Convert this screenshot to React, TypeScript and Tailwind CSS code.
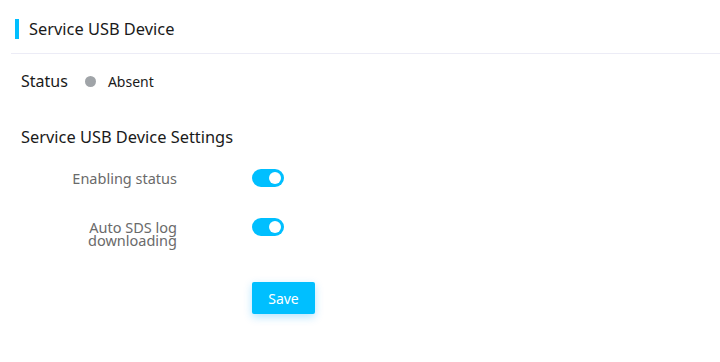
import React from "react";

function Toggle() {
  return (
    <div className="relative w-[32px] h-[18px] rounded-full bg-[#00bfff]">
      <div className="absolute right-[3px] top-[3px] w-[12px] h-[12px] rounded-full bg-white" />
    </div>
  );
}

export default function App() {
  return (
    <div
      className="w-[720px] h-[362px] bg-white"
      style={{ fontFamily: '"Noto Sans", "Open Sans", Arial, sans-serif' }}
    >
      <div className="pl-[11px] pt-[19px]">
        <div className="flex items-center h-[20px] pl-[4px]">
          <div className="w-[4px] h-[20px] bg-[#00bfff]" />
          <span className="ml-[10px] text-[16.4px] text-[#1a1a1a] leading-none">Service USB Device</span>
        </div>
        <div className="mt-[14px] h-px bg-[#ececf6]" />
      </div>
      <div className="pl-[21px]">
        <div className="flex items-center mt-[17px] h-[20px]">
          <span className="text-[16px] text-[#1a1a1a]">Status</span>
          <span className="ml-[17px] w-[11px] h-[11px] rounded-full bg-[#a0a4a8]" />
          <span className="ml-[12px] text-[14px] text-[#1a1a1a]">Absent</span>
        </div>
        <div className="mt-[36px] text-[16.4px] text-[#1a1a1a] leading-[20px]">Service USB Device Settings</div>
        <div className="mt-[22px] flex items-center">
          <div className="w-[156px] text-right text-[14.5px] text-[#6a6a6a] leading-[14px]">Enabling status</div>
          <div className="ml-[75px]"><Toggle /></div>
        </div>
        <div className="mt-[31px] flex items-start">
          <div className="w-[156px] text-right text-[14.5px] text-[#6a6a6a] leading-[13px] pt-[3px]">
            Auto SDS log<br />downloading
          </div>
          <div className="ml-[75px]"><Toggle /></div>
        </div>
        <div className="mt-[35px] ml-[231px]">
          <button className="w-[63px] h-[32px] rounded-[2px] bg-[#00bfff] text-white text-[14px] shadow-[0_3px_8px_rgba(0,170,255,0.3)]">
            Save
          </button>
        </div>
      </div>
    </div>
  );
}
